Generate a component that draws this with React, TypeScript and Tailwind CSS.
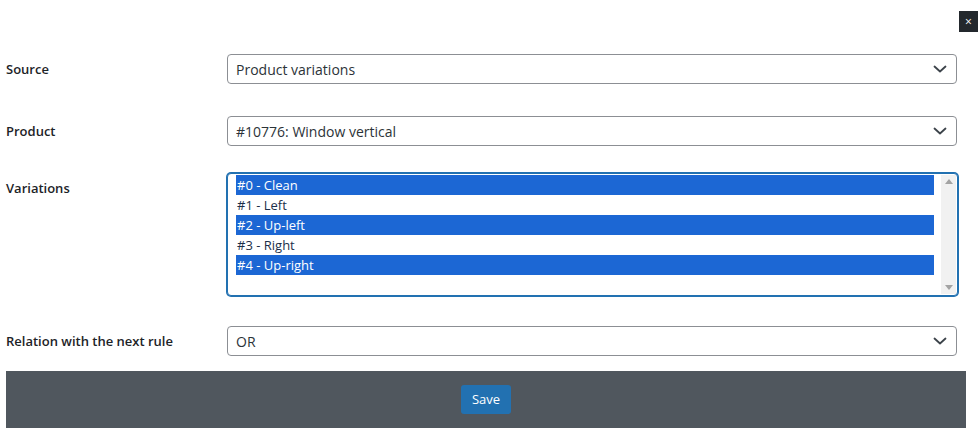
import React from 'react';

const Chevron: React.FC = () => (
  <svg width="14" height="8" viewBox="0 0 14 8" className="mr-[2px] shrink-0 text-[#3c434a]">
    <path d="M1.5 1.5l5.5 5 5.5-5" fill="none" stroke="currentColor" strokeWidth="1.8" strokeLinecap="round" strokeLinejoin="round" />
  </svg>
);

const Select: React.FC<{ value: string }> = ({ value }) => (
  <div className="flex h-[30px] items-center justify-between rounded-[4px] border border-[#8c8f94] bg-white pl-[8px] pr-[7px] text-[14px] text-[#2c3338]">
    <span>{value}</span>
    <Chevron />
  </div>
);

const variations = [
  { label: '#0 - Clean', selected: true },
  { label: '#1 - Left', selected: false },
  { label: '#2 - Up-left', selected: true },
  { label: '#3 - Right', selected: false },
  { label: '#4 - Up-right', selected: true },
];

const Row: React.FC<{ label: string; children: React.ReactNode; className?: string }> = ({ label, children, className }) => (
  <div className={`grid grid-cols-[227px_1fr] items-start pr-[21px] ${className ?? ''}`}>
    <div className="pl-[6px] pt-[6px] text-[13px] font-semibold text-[#1d2327]">{label}</div>
    <div>{children}</div>
  </div>
);

export default function App() {
  return (
    <div className="h-[438px] w-[978px] overflow-hidden bg-white font-['Open_Sans','Noto_Sans',sans-serif]">
      <div className="flex justify-end pt-[11px]">
        <button className="flex h-[21px] w-[19px] items-center justify-center bg-[#23282d] text-[12px] leading-none text-white">
          ×
        </button>
      </div>

      <Row label="Source" className="mt-[22px]">
        <Select value="Product variations" />
      </Row>

      <Row label="Product" className="mt-[32px]">
        <Select value="#10776: Window vertical" />
      </Row>

      <Row label="Variations" className="mt-[27px]">
        <div className="mr-[-1px] flex h-[123px] rounded-[4px] border border-[#2271b1] bg-white shadow-[0_0_0_1px_#2271b1]">
          <div className="flex-1 pl-[8px] pr-[7px] pt-[1px]">
            {variations.map((v) => (
              <div
                key={v.label}
                className={`h-[20px] text-[13px] leading-[20px] ${
                  v.selected ? 'bg-[#1c67d4] text-white' : 'text-[#1b2f4a]'
                }`}
              >
                <span className="pl-[1px]">{v.label}</span>
              </div>
            ))}
          </div>
          <div className="my-[1px] mr-[1px] flex w-[15px] flex-col items-center justify-between bg-[#f1f1f1] py-[4px]">
            <svg width="8" height="5" viewBox="0 0 8 5">
              <path d="M0 5L4 0l4 5z" fill="#a3a3a3" />
            </svg>
            <svg width="8" height="5" viewBox="0 0 8 5">
              <path d="M0 0l4 5 4-5z" fill="#a3a3a3" />
            </svg>
          </div>
        </div>
      </Row>

      <Row label="Relation with the next rule" className="mt-[30px]">
        <Select value="OR" />
      </Row>

      <div className="ml-[6px] mr-[12px] mt-[15px] flex h-[57px] items-center justify-center bg-[#50575e]">
        <button className="h-[29px] rounded-[3px] bg-[#2271b1] px-[11px] text-[13px] text-white">Save</button>
      </div>
    </div>
  );
}
